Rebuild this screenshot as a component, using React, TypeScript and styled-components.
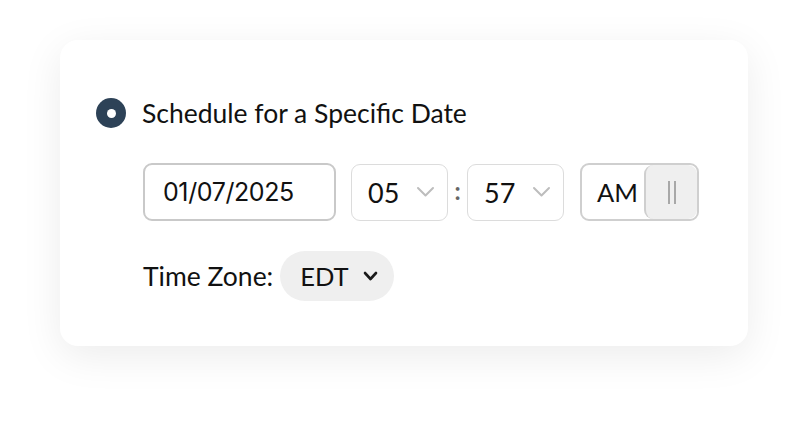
import styled, {createGlobalStyle} from "styled-components";

const Global = createGlobalStyle`
  html, body {
    margin: 0;
    padding: 0;
    background: #fff;
    font-family: Lato, "Noto Sans", sans-serif;
    color: #111;
  }
`

const Page = styled.div`
  width: 808px;
  height: 426px;
  padding: 40px 60px 0;
  box-sizing: border-box;
`

const Card = styled.div`
  width: 688px;
  height: 306px;
  background: #fff;
  border-radius: 18px;
  box-shadow: 0 10px 40px rgba(0,0,0,0.08);
  box-sizing: border-box;
  padding: 57px 0 0 36px;
  display: flex;
  flex-direction: column;
`

const RadioRow = styled.label`
  display: flex;
  align-items: center;
  gap: 16px;
  font-size: 26.5px;
  height: 32px;
`

const Radio = styled.span`
  width: 30px;
  height: 30px;
  border-radius: 50%;
  background: #2d4257;
  display: flex;
  align-items: center;
  justify-content: center;
  &::after{
    content: "";
    width: 9px;
    height: 9px;
    border-radius: 50%;
    background: #fff;
  }
`

const Fields = styled.div`
  display: flex;
  align-items: center;
  margin: 34px 0 0 47px;
  height: 58px;
`

const DateBox = styled.div`
  width: 193px;
  height: 58px;
  box-sizing: border-box;
  border: 2px solid #c9c9c9;
  border-radius: 9px;
  display: flex;
  align-items: center;
  padding-left: 18px;
  font-family: Inter, sans-serif;
  font-size: 25px;
  letter-spacing: -0.4px;
`

const Select = styled.div<{$ml:number}>`
  margin-left: ${p=>p.$ml}px;
  width: 97px;
  height: 57px;
  box-sizing: border-box;
  border: 1.5px solid #dcdcdc;
  border-radius: 9px;
  display: flex;
  align-items: center;
  justify-content: space-between;
  padding: 0 12px 0 16px;
  font-size: 27px;
`

const Colon = styled.span`
  width: 19px;
  text-align: center;
  font-size: 24px;
  font-weight: 700;
  color: #666;
  margin-top: -4px;
`

const Toggle = styled.div`
  margin-left: 16px;
  width: 119px;
  height: 58px;
  box-sizing: border-box;
  border: 2px solid #cfcfcf;
  border-radius: 9px;
  display: flex;
  align-items: center;
  overflow: hidden;
  font-size: 25.5px;
`

const ToggleText = styled.span`
  flex: 1;
  padding-left: 15px;
`

const Knob = styled.div`
  width: 53px;
  height: 100%;
  background: #efefef;
  border-left: 2px solid #cfcfcf;
  border-radius: 9px;
  box-sizing: border-box;
  display: flex;
  align-items: center;
  justify-content: center;
  gap: 4px;
  span{
    width: 2px;
    height: 23px;
    background: #a8a8a8;
  }
`

const ZoneRow = styled.div`
  display: flex;
  align-items: center;
  gap: 7px;
  margin: 30px 0 0 47px;
  font-size: 26.5px;
`

const Pill = styled.div`
  height: 50px;
  width: 114px;
  border-radius: 25px;
  background: #efefef;
  display: flex;
  align-items: center;
  box-sizing: border-box;
  padding-left: 20px;
  gap: 14px;
  font-size: 25.5px;
`

const Chevron = ({color, w, h, sw}:{color:string, w:number, h:number, sw:number}) => (
  <svg width={w + 4} height={h + 4} viewBox={`0 0 ${w + 4} ${h + 4}`} fill="none" stroke={color} strokeWidth={sw} strokeLinecap="round" strokeLinejoin="round">
    <path d={`M2 2l${w / 2} ${h}l${w / 2} ${-h}`}/>
  </svg>
)

export default function App(){
  return <Page>
    <Global/>
    <Card>
      <RadioRow>
        <Radio/>
        Schedule for a Specific Date
      </RadioRow>
      <Fields>
        <DateBox>01/07/2025</DateBox>
        <Select $ml={15}>05<Chevron color="#bdbdbd" w={15} h={7.5} sw={2}/></Select>
        <Colon>:</Colon>
        <Select $ml={0}>57<Chevron color="#bdbdbd" w={15} h={7.5} sw={2}/></Select>
        <Toggle>
          <ToggleText>AM</ToggleText>
          <Knob><span/><span/></Knob>
        </Toggle>
      </Fields>
      <ZoneRow>
        Time Zone:
        <Pill>EDT<Chevron color="#1a1a1a" w={11} h={6} sw={2.6}/></Pill>
      </ZoneRow>
    </Card>
  </Page>
}
